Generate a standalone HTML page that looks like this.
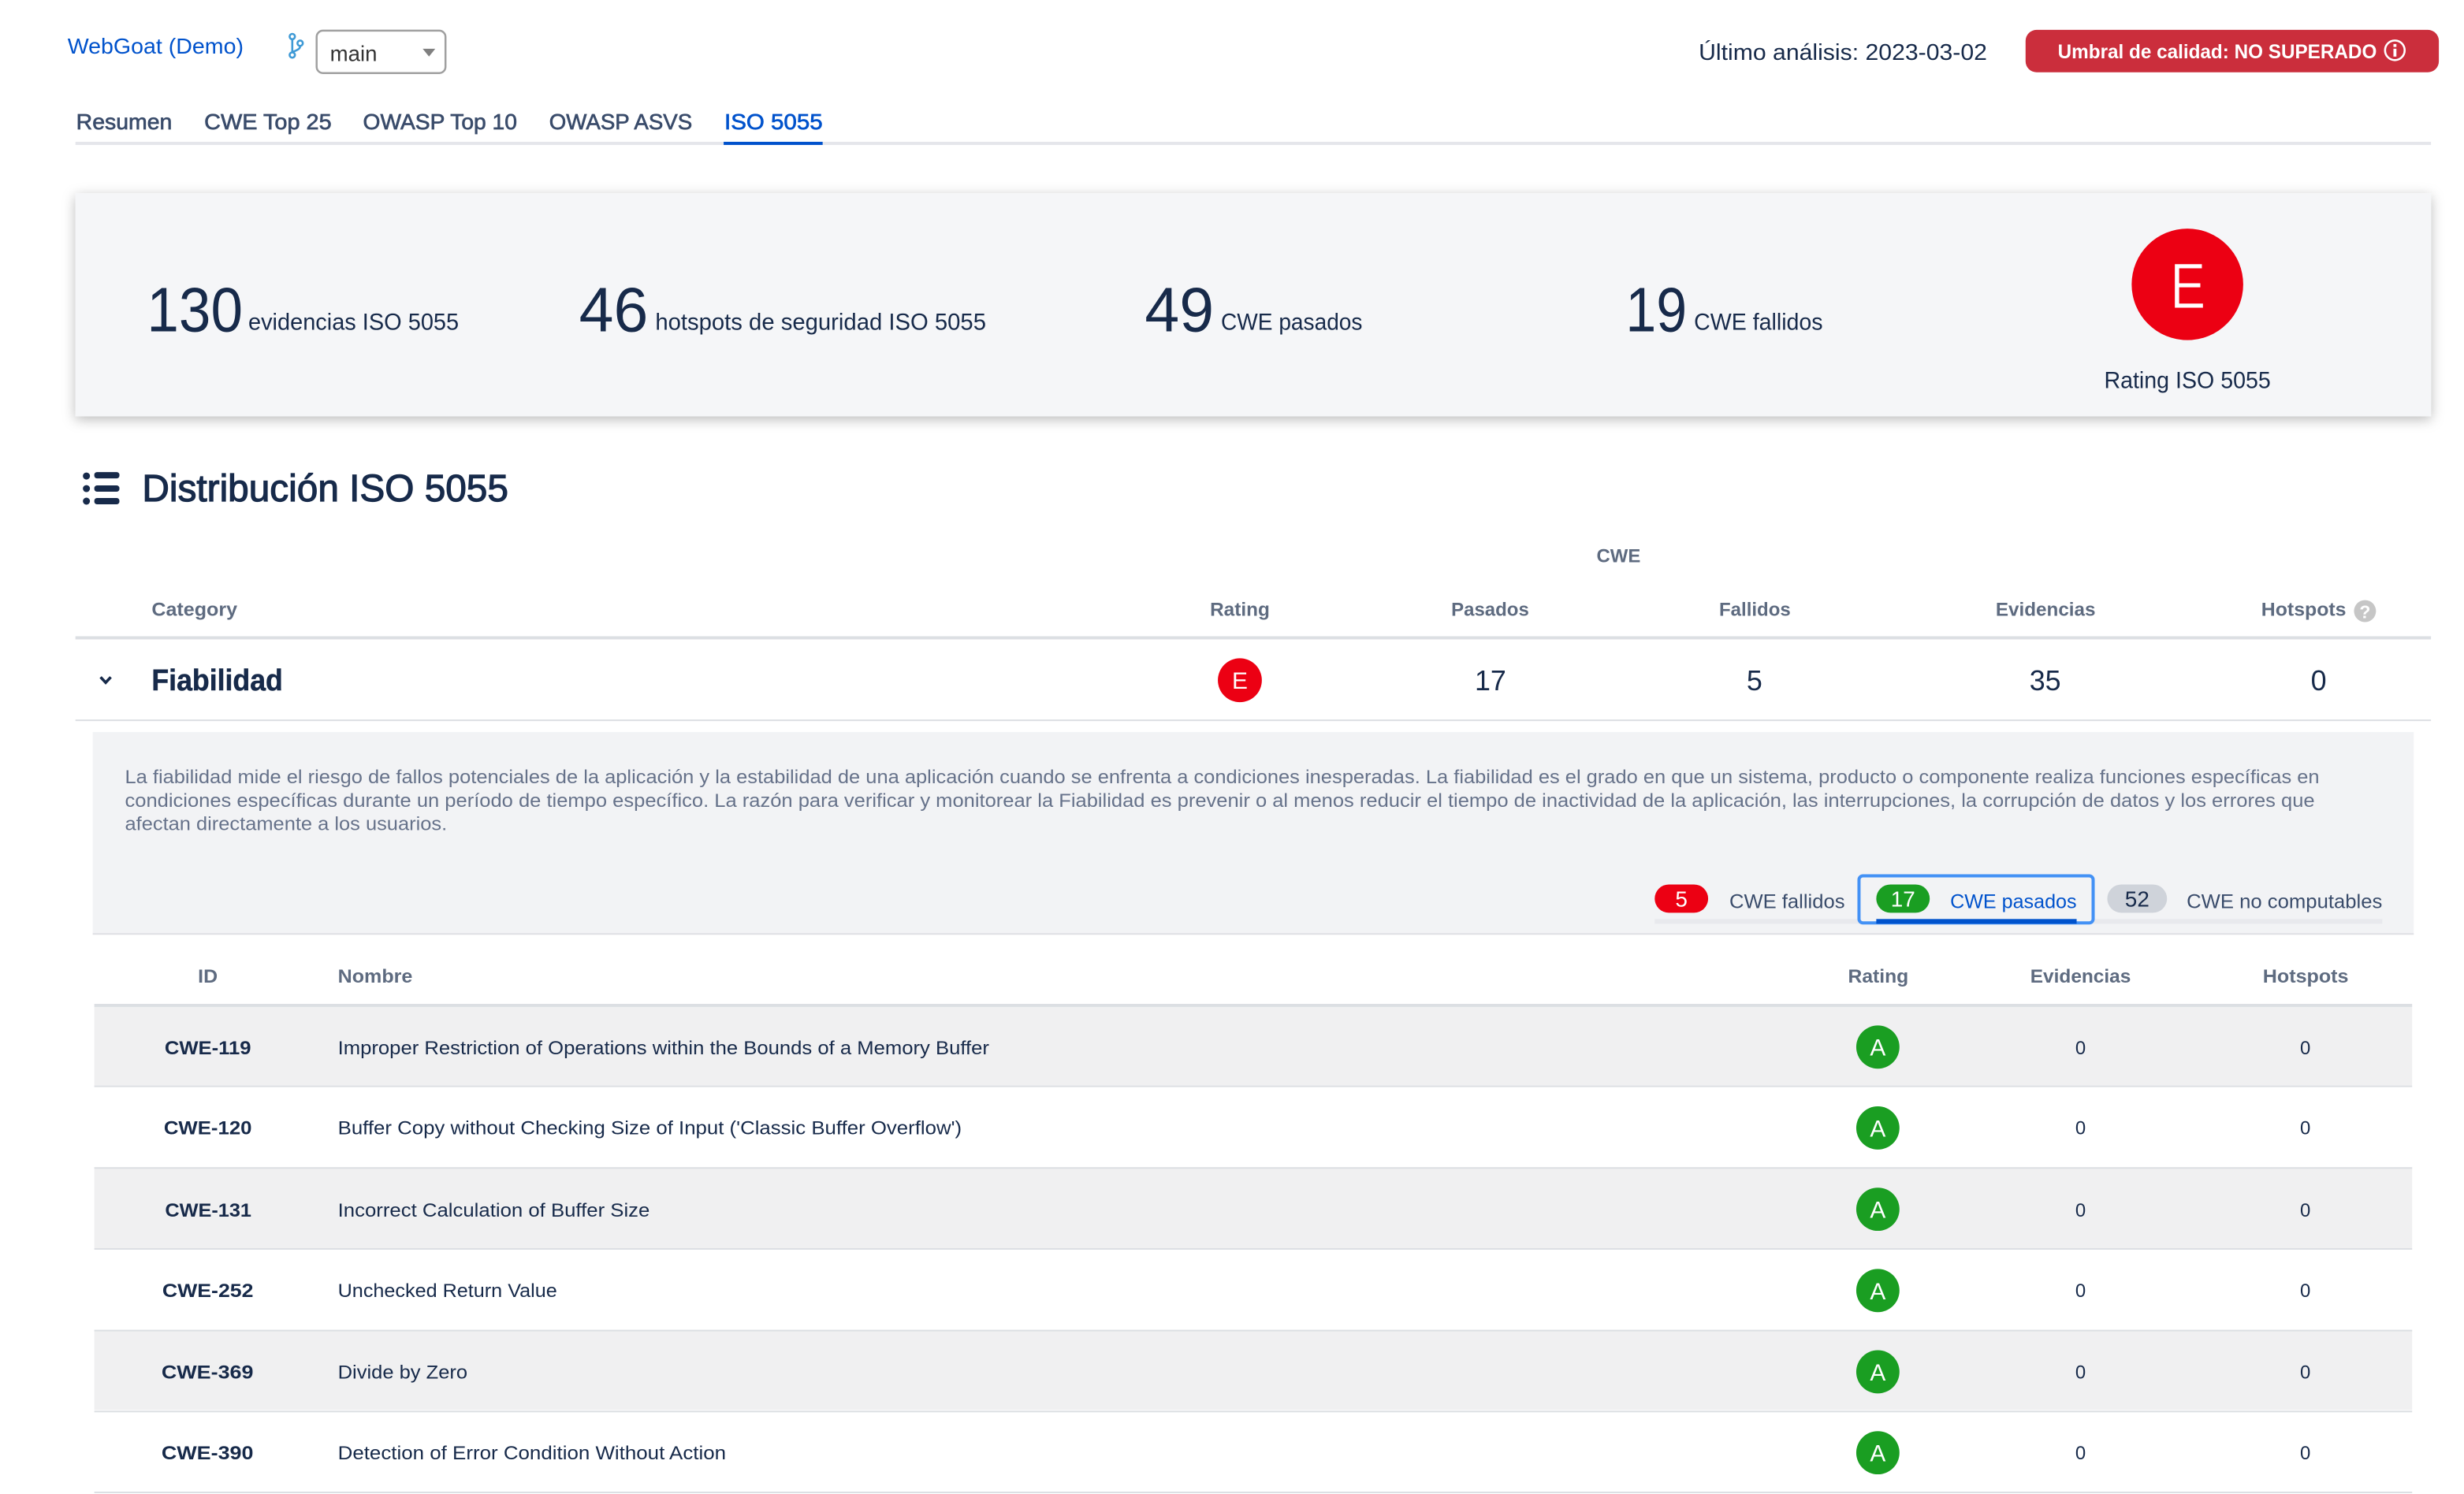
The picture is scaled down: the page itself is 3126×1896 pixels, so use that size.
<!DOCTYPE html>
<html lang="es"><head><meta charset="utf-8"><title>ISO 5055</title>
<style>
html,body{margin:0;padding:0;background:#fff;width:3126px;height:1896px;overflow:hidden}
svg{display:block;font-family:"Liberation Sans",sans-serif}
text{white-space:pre}
.n{fill:#172a4a}
.h{fill:#5e6b80;font-size:24px;font-weight:bold}
.c{font-size:24px;fill:#172a4a}
.id{font-size:24px;font-weight:bold;fill:#172a4a}
.z{font-size:24px;fill:#172a4a;text-anchor:middle}
.d{font-size:24px;fill:#66728a}
.t{font-size:28px;fill:#3a4c6b;stroke:#3a4c6b;stroke-width:.7px}
.l{font-size:30px;fill:#172a4a}
.b{font-size:80px;fill:#172a4a}
.big{font-size:36px;fill:#172a4a;text-anchor:middle}
.a{font-size:30px;fill:#fff;text-anchor:middle}
</style></head><body>
<svg width="3126" height="1896" viewBox="0 0 3136 1902" xmlns="http://www.w3.org/2000/svg">
<defs><filter id="s" x="-5%" y="-20%" width="110%" height="150%"><feDropShadow dx="0" dy="4" stdDeviation="8" flood-color="#000" flood-opacity=".27"/></filter></defs>
<rect width="3136" height="1902" fill="#fff"/>

<!-- top bar -->
<text x="86" y="68" font-size="28" fill="#0052cc" textLength="224" lengthAdjust="spacingAndGlyphs">WebGoat (Demo)</text>
<g fill="none" stroke="#3f9ad6" stroke-width="2.6"><circle cx="372" cy="46.5" r="3.4"/><circle cx="372" cy="70" r="3.4"/><circle cx="382" cy="55" r="3.4"/><path d="M372 50v16.500M382 58.500c0 5-6 5.500-10 8"/></g>
<rect x="403" y="39" width="164" height="54" rx="8" fill="#fff" stroke="#a0a0a0" stroke-width="2.500"/>
<text x="420" y="77.500" font-size="28" fill="#333" textLength="60" lengthAdjust="spacingAndGlyphs">main</text>
<path d="M538 62h16l-8 10z" fill="#808080"/>
<text x="2162" y="76" font-size="29" class="n" textLength="367" lengthAdjust="spacingAndGlyphs">Último análisis: 2023-03-02</text>
<rect x="2578" y="38" width="526" height="54" rx="14" fill="#cb2e3c"/>
<text x="2619" y="74" font-size="25" font-weight="bold" fill="#fff" textLength="406" lengthAdjust="spacingAndGlyphs">Umbral de calidad: NO SUPERADO</text>
<circle cx="3048" cy="64" r="12.5" fill="none" stroke="#fff" stroke-width="2.6"/><rect x="3046.2" y="62" width="3.8" height="10" fill="#fff"/><rect x="3046.2" y="56" width="3.8" height="3.8" fill="#fff"/>

<!-- tabs -->
<text x="97" y="164.500" class="t" textLength="122" lengthAdjust="spacingAndGlyphs">Resumen</text>
<text x="260" y="164.500" class="t" textLength="162" lengthAdjust="spacingAndGlyphs">CWE Top 25</text>
<text x="462" y="164.500" class="t" textLength="196" lengthAdjust="spacingAndGlyphs">OWASP Top 10</text>
<text x="699" y="164.500" class="t" textLength="182" lengthAdjust="spacingAndGlyphs">OWASP ASVS</text>
<text x="922" y="164.500" font-size="28" fill="#0052cc" stroke="#0052cc" stroke-width=".7" textLength="125" lengthAdjust="spacingAndGlyphs">ISO 5055</text>
<rect x="96" y="180.500" width="2998" height="4" fill="#e5e6eb"/>
<rect x="921" y="180.500" width="126" height="4" fill="#0052cc"/>

<!-- summary card -->
<rect x="96" y="246" width="2998" height="284" fill="#f5f6f8" filter="url(#s)"/>
<text x="187" y="422" class="b" textLength="122" lengthAdjust="spacingAndGlyphs">130</text>
<text x="316" y="420" class="l" textLength="268" lengthAdjust="spacingAndGlyphs">evidencias ISO 5055</text>
<text x="737" y="422" class="b" textLength="88" lengthAdjust="spacingAndGlyphs">46</text>
<text x="834" y="420" class="l" textLength="421" lengthAdjust="spacingAndGlyphs">hotspots de seguridad ISO 5055</text>
<text x="1457" y="422" class="b" textLength="88" lengthAdjust="spacingAndGlyphs">49</text>
<text x="1554" y="420" class="l" textLength="180" lengthAdjust="spacingAndGlyphs">CWE pasados</text>
<text x="2069" y="422" class="b" textLength="78" lengthAdjust="spacingAndGlyphs">19</text>
<text x="2156" y="420" class="l" textLength="164" lengthAdjust="spacingAndGlyphs">CWE fallidos</text>
<circle cx="2784" cy="362" r="71" fill="#ec0013"/>
<text x="2762" y="392" font-size="82" fill="#fff" stroke="#ec0013" stroke-width="1" textLength="45" lengthAdjust="spacingAndGlyphs">E</text>
<text x="2678" y="494" class="l" textLength="212" lengthAdjust="spacingAndGlyphs">Rating ISO 5055</text>

<!-- heading -->
<g fill="#172a4a"><circle cx="110" cy="606" r="4.5"/><circle cx="110" cy="622" r="4.5"/><circle cx="110" cy="638" r="4.5"/><rect x="120" y="601" width="32" height="8" rx="3.5"/><rect x="120" y="618" width="32" height="8" rx="3.5"/><rect x="120" y="634" width="32" height="8" rx="3.5"/></g>
<text x="181" y="638" font-size="48" class="n" stroke="#172a4a" stroke-width="1.2" textLength="466" lengthAdjust="spacingAndGlyphs">Distribución ISO 5055</text>

<!-- main table header -->
<text x="2032" y="716" class="h" textLength="56" lengthAdjust="spacingAndGlyphs">CWE</text>
<text x="193" y="784" class="h" textLength="109" lengthAdjust="spacingAndGlyphs">Category</text>
<text x="1540" y="784" class="h" textLength="76" lengthAdjust="spacingAndGlyphs">Rating</text>
<text x="1847" y="784" class="h" textLength="99" lengthAdjust="spacingAndGlyphs">Pasados</text>
<text x="2188" y="784" class="h" textLength="91" lengthAdjust="spacingAndGlyphs">Fallidos</text>
<text x="2540" y="784" class="h" textLength="127" lengthAdjust="spacingAndGlyphs">Evidencias</text>
<text x="2878" y="784" class="h" textLength="108" lengthAdjust="spacingAndGlyphs">Hotspots</text>
<circle cx="3010" cy="778" r="14" fill="#c6c6c6"/>
<text x="3010" y="787" font-size="23" font-weight="bold" fill="#fff" text-anchor="middle">?</text>
<rect x="96" y="810" width="2998" height="4" fill="#dcdfe3"/>

<!-- Fiabilidad row -->
<path d="M128 862l6.500 7 6.500-7" fill="none" stroke="#172a4a" stroke-width="3.600"/>
<text x="193" y="879" font-size="38" font-weight="bold" class="n" stroke="#172a4a" stroke-width=".5" textLength="167" lengthAdjust="spacingAndGlyphs">Fiabilidad</text>
<circle cx="1578" cy="866" r="28" fill="#ec0013"/>
<text x="1578" y="877" class="a">E</text>
<text x="1897" y="879" class="big">17</text>
<text x="2233" y="879" class="big">5</text>
<text x="2603" y="879" class="big">35</text>
<text x="2951" y="879" class="big">0</text>
<rect x="96" y="916" width="2998" height="2" fill="#dcdfe3"/>

<!-- panel -->
<rect x="118" y="932" width="2954" height="258" fill="#f2f3f5"/>
<rect x="118" y="1188" width="2954" height="2" fill="#dfe0e4"/>
<text x="159" y="997" class="d" textLength="2793" lengthAdjust="spacingAndGlyphs">La fiabilidad mide el riesgo de fallos potenciales de la aplicación y la estabilidad de una aplicación cuando se enfrenta a condiciones inesperadas. La fiabilidad es el grado en que un sistema, producto o componente realiza funciones específicas en</text>
<text x="159" y="1027" class="d" textLength="2787" lengthAdjust="spacingAndGlyphs">condiciones específicas durante un período de tiempo específico. La razón para verificar y monitorear la Fiabilidad es prevenir o al menos reducir el tiempo de inactividad de la aplicación, las interrupciones, la corrupción de datos y los errores que</text>
<text x="159" y="1057" class="d" textLength="410" lengthAdjust="spacingAndGlyphs">afectan directamente a los usuarios.</text>

<!-- sub tabs -->
<rect x="2106" y="1170" width="926" height="6" fill="#e8e9ed"/>
<rect x="2106" y="1126" width="68" height="36" rx="18" fill="#ec0013"/>
<text x="2140" y="1154" font-size="28" fill="#fff" text-anchor="middle">5</text>
<text x="2201" y="1156" font-size="25" fill="#3a4c6b" textLength="147" lengthAdjust="spacingAndGlyphs">CWE fallidos</text>
<rect x="2366" y="1115" width="298" height="60" rx="5" fill="#f2f3f5" stroke="#4391f5" stroke-width="4"/>
<rect x="2388" y="1126" width="68" height="36" rx="18" fill="#1a9e22"/>
<text x="2422" y="1154" font-size="28" fill="#fff" text-anchor="middle">17</text>
<text x="2482" y="1156" font-size="25" fill="#0052cc" textLength="161" lengthAdjust="spacingAndGlyphs">CWE pasados</text>
<rect x="2388" y="1170" width="255" height="6" fill="#0052cc"/>
<rect x="2682" y="1126" width="76" height="36" rx="18" fill="#cfd3da"/>
<text x="2720" y="1154" font-size="28" class="n" text-anchor="middle">52</text>
<text x="2783" y="1156" font-size="25" fill="#3a4c6b" textLength="249" lengthAdjust="spacingAndGlyphs">CWE no computables</text>

<!-- sub table header -->
<text x="252" y="1251" class="h" textLength="25" lengthAdjust="spacingAndGlyphs">ID</text>
<text x="430" y="1251" class="h" textLength="95" lengthAdjust="spacingAndGlyphs">Nombre</text>
<text x="2352" y="1251" class="h" textLength="77" lengthAdjust="spacingAndGlyphs">Rating</text>
<text x="2584" y="1251" class="h" textLength="128" lengthAdjust="spacingAndGlyphs">Evidencias</text>
<text x="2880" y="1251" class="h" textLength="109" lengthAdjust="spacingAndGlyphs">Hotspots</text>
<rect x="120" y="1278" width="2950" height="4" fill="#dcdfe3"/>

<!-- rows -->
<rect x="120" y="1282" width="2950" height="100" fill="#f0f0f1"/>
<rect x="120" y="1486" width="2950" height="103" fill="#f0f0f1"/>
<rect x="120" y="1693" width="2950" height="102" fill="#f0f0f1"/>
<g fill="#dcdfe3">
<rect x="120" y="1382" width="2950" height="2"/><rect x="120" y="1486" width="2950" height="2"/><rect x="120" y="1589" width="2950" height="2"/><rect x="120" y="1693" width="2950" height="2"/><rect x="120" y="1796" width="2950" height="2"/><rect x="120" y="1899" width="2950" height="2"/>
</g>

<text x="209.500" y="1342" class="id" textLength="110" lengthAdjust="spacingAndGlyphs">CWE-119</text>
<text x="430" y="1342" class="c" textLength="829" lengthAdjust="spacingAndGlyphs">Improper Restriction of Operations within the Bounds of a Memory Buffer</text>
<circle cx="2390" cy="1333" r="27.5" fill="#1a9e22"/><text x="2390" y="1344" class="a">A</text>
<text x="2648" y="1342" class="z">0</text><text x="2934" y="1342" class="z">0</text>

<text x="208.500" y="1444" class="id" textLength="112" lengthAdjust="spacingAndGlyphs">CWE-120</text>
<text x="430" y="1444" class="c" textLength="794" lengthAdjust="spacingAndGlyphs">Buffer Copy without Checking Size of Input ('Classic Buffer Overflow')</text>
<circle cx="2390" cy="1436" r="27.5" fill="#1a9e22"/><text x="2390" y="1447" class="a">A</text>
<text x="2648" y="1444" class="z">0</text><text x="2934" y="1444" class="z">0</text>

<text x="210" y="1549" class="id" textLength="110" lengthAdjust="spacingAndGlyphs">CWE-131</text>
<text x="430" y="1549" class="c" textLength="397" lengthAdjust="spacingAndGlyphs">Incorrect Calculation of Buffer Size</text>
<circle cx="2390" cy="1539.500" r="27.5" fill="#1a9e22"/><text x="2390" y="1550.500" class="a">A</text>
<text x="2648" y="1549" class="z">0</text><text x="2934" y="1549" class="z">0</text>

<text x="206.500" y="1651" class="id" textLength="116" lengthAdjust="spacingAndGlyphs">CWE-252</text>
<text x="430" y="1651" class="c" textLength="279" lengthAdjust="spacingAndGlyphs">Unchecked Return Value</text>
<circle cx="2390" cy="1643" r="27.5" fill="#1a9e22"/><text x="2390" y="1654" class="a">A</text>
<text x="2648" y="1651" class="z">0</text><text x="2934" y="1651" class="z">0</text>

<text x="205.500" y="1755" class="id" textLength="117" lengthAdjust="spacingAndGlyphs">CWE-369</text>
<text x="430" y="1755" class="c" textLength="165" lengthAdjust="spacingAndGlyphs">Divide by Zero</text>
<circle cx="2390" cy="1746.500" r="27.5" fill="#1a9e22"/><text x="2390" y="1757.500" class="a">A</text>
<text x="2648" y="1755" class="z">0</text><text x="2934" y="1755" class="z">0</text>

<text x="205.500" y="1858" class="id" textLength="117" lengthAdjust="spacingAndGlyphs">CWE-390</text>
<text x="430" y="1858" class="c" textLength="494" lengthAdjust="spacingAndGlyphs">Detection of Error Condition Without Action</text>
<circle cx="2390" cy="1849.500" r="27.5" fill="#1a9e22"/><text x="2390" y="1860.500" class="a">A</text>
<text x="2648" y="1858" class="z">0</text><text x="2934" y="1858" class="z">0</text>
</svg>
</body></html>
